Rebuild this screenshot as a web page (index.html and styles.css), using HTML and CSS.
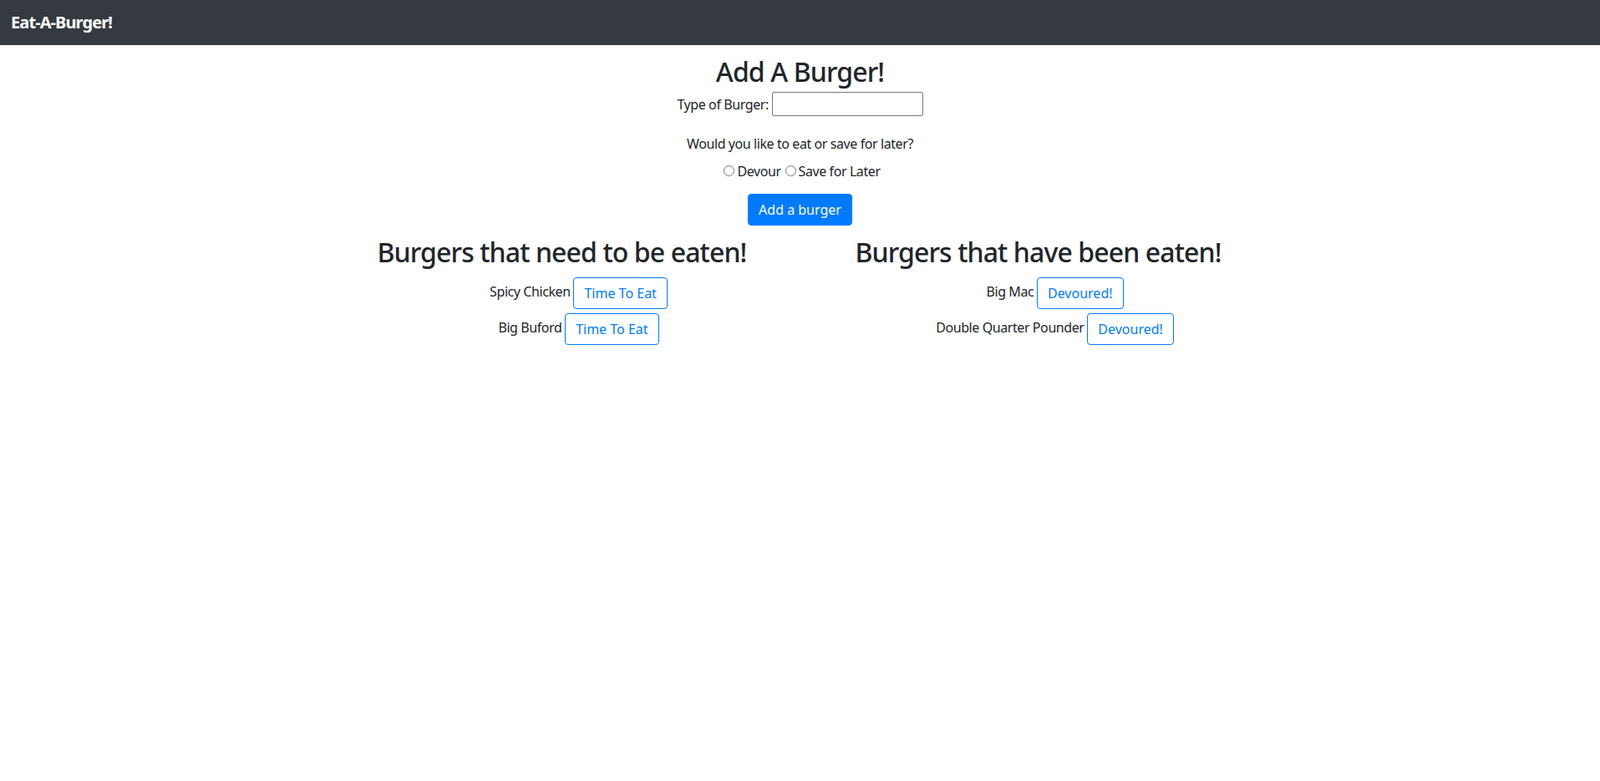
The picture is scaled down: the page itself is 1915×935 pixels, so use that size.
FILE: index.html
```html
<!DOCTYPE html>
<html lang="en">
<head>
<meta charset="utf-8">
<title>Eat-A-Burger!</title>
<link rel="stylesheet" href="styles.css">
</head>
<body>
<nav class="navbar">
  <span class="brand">Eat-A-Burger!</span>
</nav>
<main class="container">
  <section class="add">
    <h2 class="title">Add A Burger!</h2>
    <form class="form">
      <div class="field">
        <label for="burger">Type of Burger:</label> <input id="burger" class="text-input" type="text">
      </div>
      <p class="question">Would you like to eat or save for later?</p>
      <div class="radios"><input type="radio" name="eat" id="devour"><label for="devour">Devour</label><input type="radio" name="eat" id="later"><label for="later">Save for Later</label></div>
      <button type="button" class="btn btn-primary">Add a burger</button>
    </form>
  </section>
  <div class="row">
    <div class="col">
      <h2 class="col-title">Burgers that need to be eaten!</h2>
      <ul class="list">
        <li class="item">Spicy Chicken <button type="button" class="btn btn-outline">Time To Eat</button></li>
        <li class="item">Big Buford <button type="button" class="btn btn-outline">Time To Eat</button></li>
      </ul>
    </div>
    <div class="col">
      <h2 class="col-title">Burgers that have been eaten!</h2>
      <ul class="list">
        <li class="item">Big Mac <button type="button" class="btn btn-outline">Devoured!</button></li>
        <li class="item">Double Quarter Pounder <button type="button" class="btn btn-outline">Devoured!</button></li>
      </ul>
    </div>
  </div>
</main>
</body>
</html>
```
FILE: styles.css
```css
* { box-sizing: border-box; }
html, body { margin: 0; padding: 0; }
body {
  font-family: "Noto Sans", "Open Sans", sans-serif;
  font-size: 16px;
  line-height: 1.5;
  letter-spacing: -0.026em;
  color: #212529;
  background: #fff;
}
.navbar {
  height: 54px;
  background: #343a40;
  display: flex;
  align-items: center;
  padding: 0 13px;
}
.brand {
  color: #fff;
  font-size: 20px;
  font-weight: 700;
  line-height: 30px;
  letter-spacing: -0.045em;
}
.container {
  width: 1140px;
  margin: 0 auto;
  text-align: center;
}
.title, .col-title {
  font-size: 32px;
  font-weight: 500;
  line-height: 1.2;
  letter-spacing: -0.028em;
  margin: 0;
}
.title { margin-top: 13px; margin-bottom: 5px; }
.text-input {
  width: 181px;
  height: 29px;
  border: 1px solid #767676;
  border-radius: 2px;
  font: inherit;
  padding: 1px 2px;
  vertical-align: baseline;
}
.question { margin: 21px 0 9px; }
.radios { margin-bottom: 15px; }
.radios input { margin: 3px 3px 0 5px; vertical-align: baseline; }
.radios label { margin: 0; }
.btn {
  display: inline-block;
  vertical-align: middle;
  font: inherit;
  line-height: 1.5;
  padding: 6px 12px;
  border: 1px solid transparent;
  border-radius: 4px;
  cursor: pointer;
  background: transparent;
}
.btn-primary { background: #007bff; border-color: #007bff; color: #fff; }
.btn-outline { color: #007bff; border-color: #007bff; background: #fff; }
.row { display: flex; margin-top: 13px; }
.col { flex: 0 0 50%; padding: 0 15px; }
.col-title { margin-bottom: 10px; }
.list {
  list-style: none;
  margin: 0;
  padding-left: 40px;
}
.item { margin-bottom: 5px; }
```
